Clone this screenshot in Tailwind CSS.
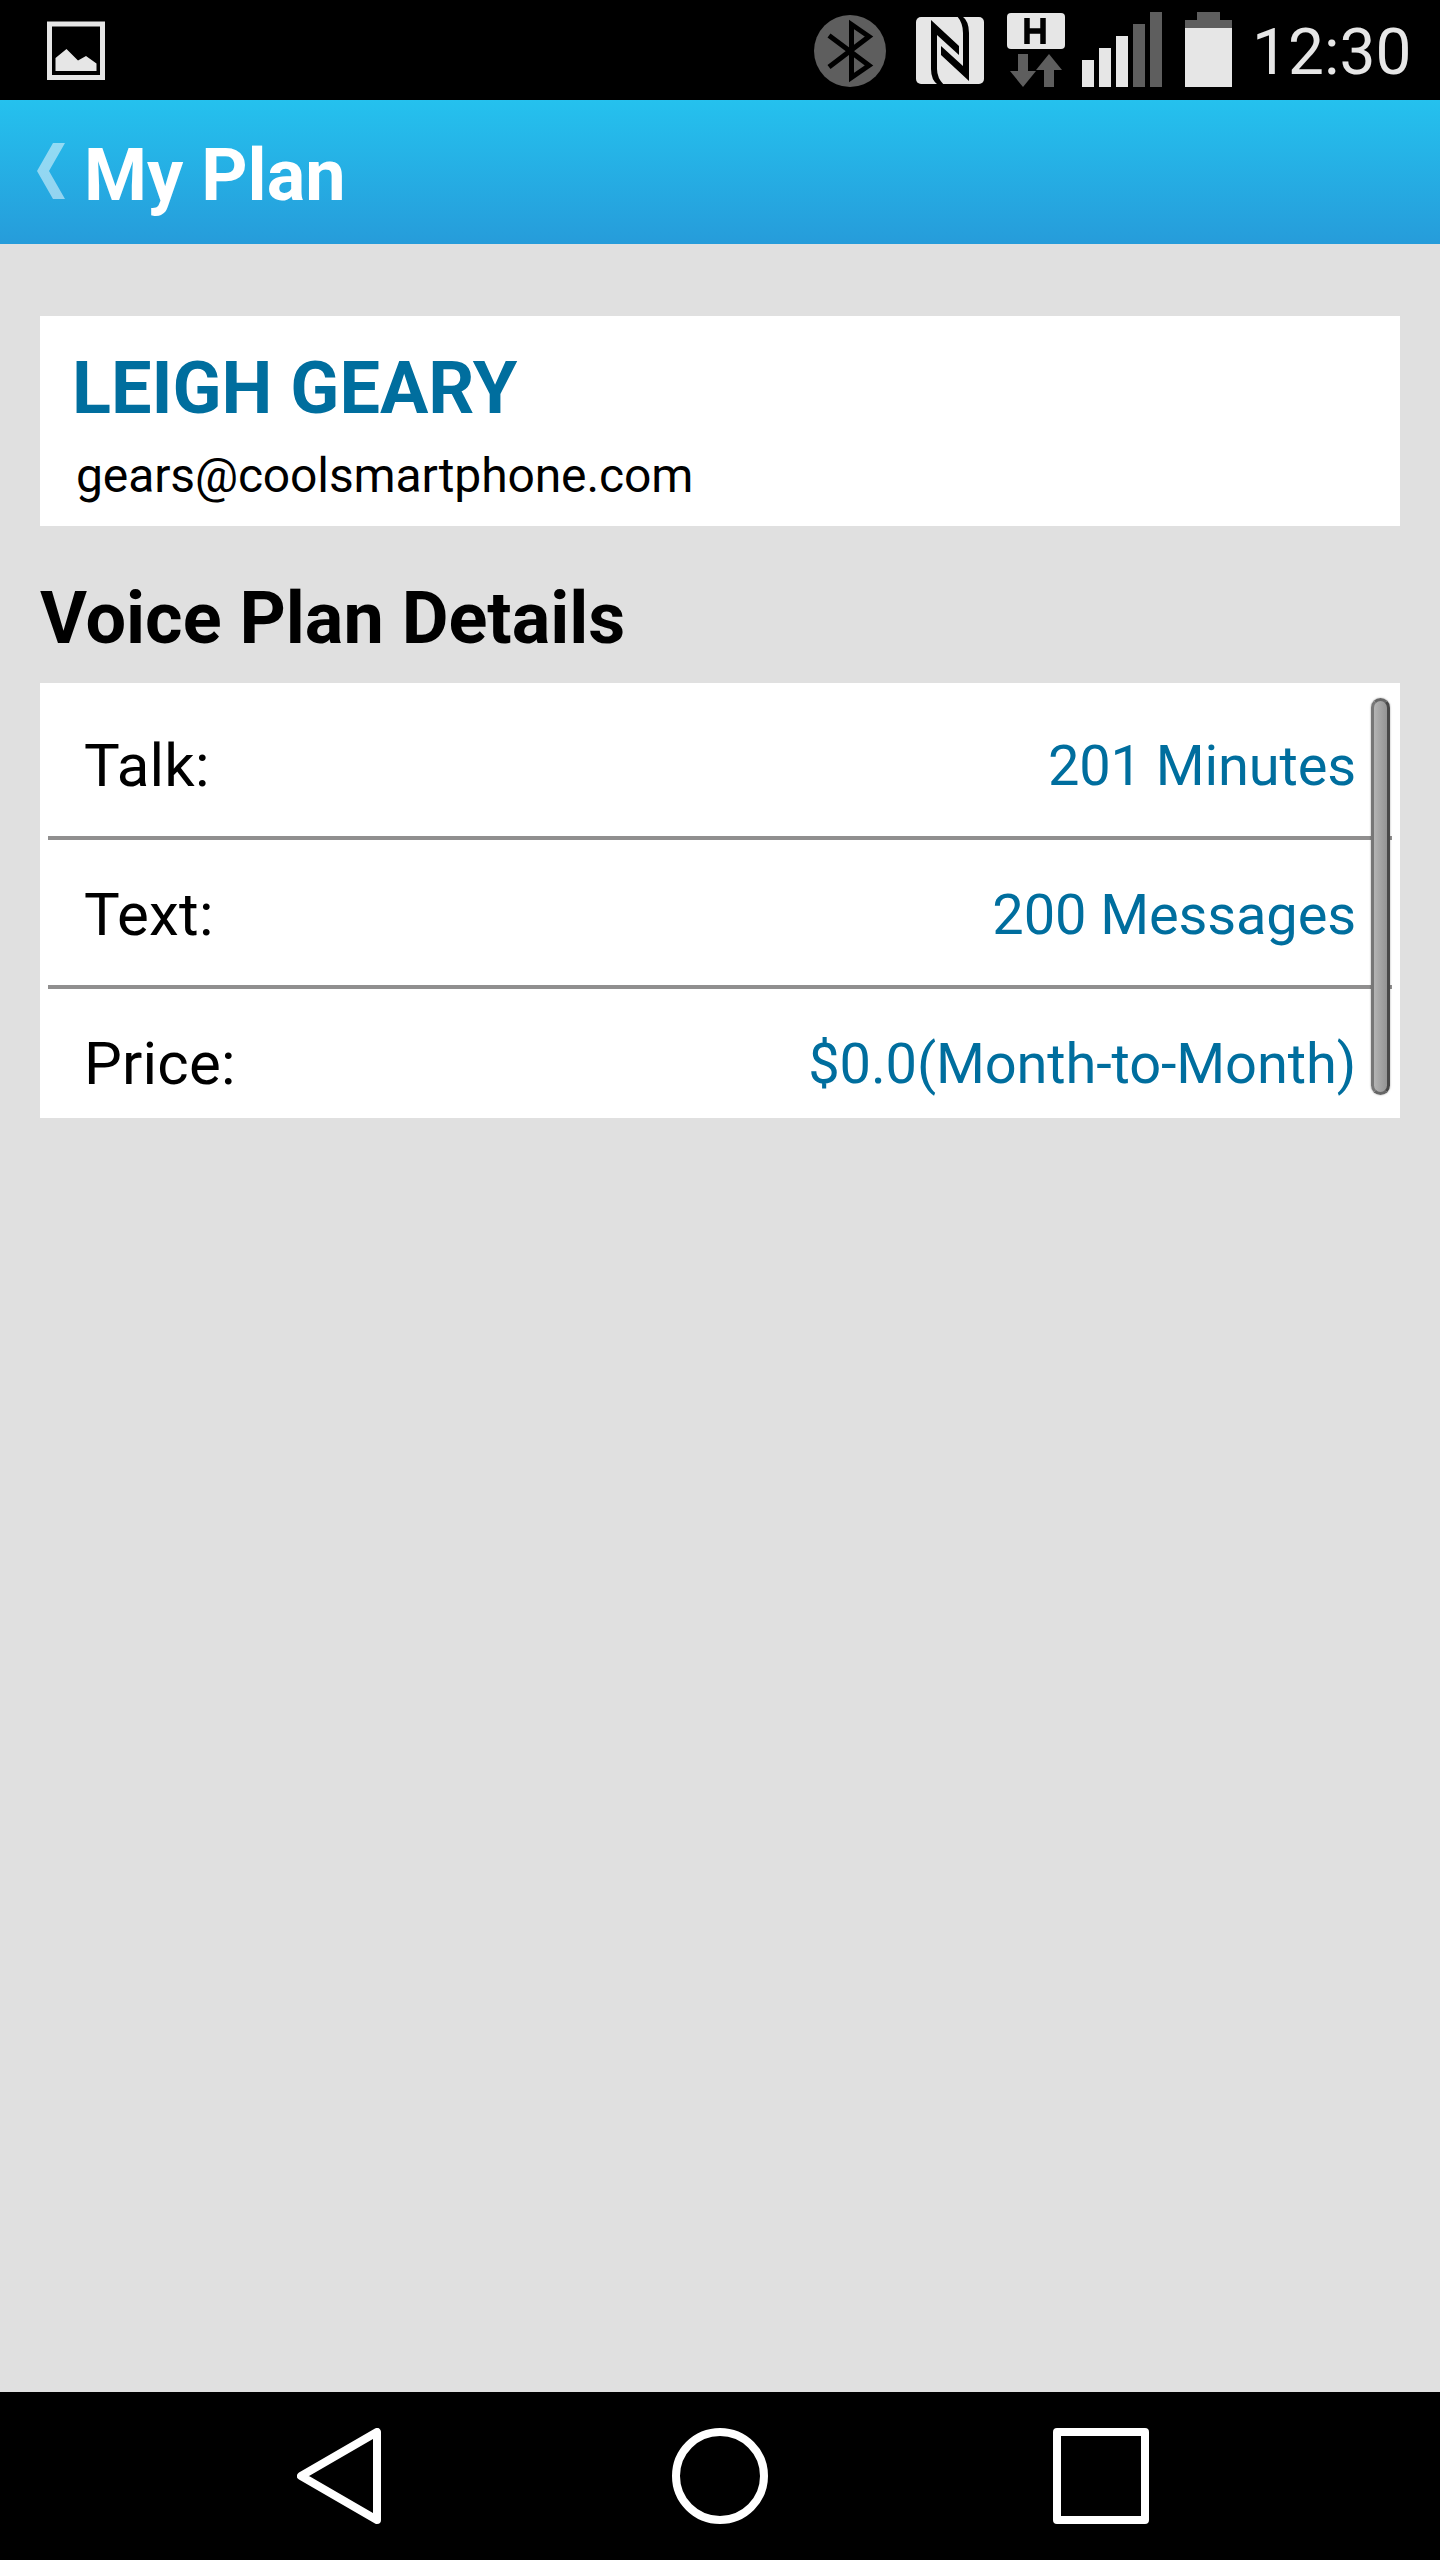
<!DOCTYPE html>
<html lang="en">
<head>
    <meta charset="UTF-8">
    <meta name="viewport" content="width=device-width, initial-scale=1.0">
    <title>My Plan</title>
    <script src="https://cdn.jsdelivr.net/npm/@tailwindcss/browser@4"></script>
</head>
<body class="bg-[#e0e0e0] font-['Roboto',sans-serif]">
    <div class="flex h-[2560px] w-[1440px] flex-col overflow-hidden">
        <!-- Status Bar -->
        <div class="flex h-[100px] shrink-0 items-center bg-black pr-[28px] pl-[47px] text-[#e6e6e6]">
            <svg class="h-[100px] w-[58px]" viewBox="47 0 58 100">
                <path d="M49.5 24h53v53.5h-53z" fill="none" stroke="#e6e6e6" stroke-width="5"/>
                <path d="M55.5 71V58l11-9 11.500 11.500 8-4.500 10.500 7.500V71z" fill="#e6e6e6"/>
            </svg>
            <div class="ml-auto flex items-center">
                <!-- Bluetooth -->
                <svg class="h-[100px] w-[72px]" viewBox="814 0 72 100">
                    <circle cx="850" cy="51" r="36" fill="#5e5e5e"/>
                    <path d="M829 35.500l40 30-17.500 12V24.500l17.500 12-40 30.500" fill="none" stroke="#000" stroke-width="5"/>
                </svg>
                <!-- NFC -->
                <svg class="ml-[30px] h-[100px] w-[68px]" viewBox="916 0 68 100">
                    <rect x="916" y="17" width="68" height="67" rx="5" fill="#e6e6e6"/>
                    <path d="M931 20l28 26v9L937 35v34q0 9 7 16h-6q-7-5-7-16z" fill="#000"/>
                    <path d="M969 81l-28-26v-9l22 20V33q0-10-6-17h5q7 5 7 17z" fill="#000"/>
                </svg>
                <!-- Mobile data -->
                <svg class="ml-[23px] h-[100px] w-[58px]" viewBox="1007 0 58 100">
                    <rect x="1007" y="13" width="58" height="36" rx="4" fill="#e6e6e6"/>
                    <path d="M1027 18v26M1043 18v26M1027 31h16" fill="none" stroke="#000" stroke-width="5.500"/>
                    <path d="M1018 54h10v17h8l-13 16-13-16h8zM1044 87h10V70h8l-13-16-13 16h8z" fill="#5e5e5e"/>
                </svg>
                <!-- Signal -->
                <svg class="ml-[17px] h-[100px] w-[80px]" viewBox="1082 0 80 100">
                    <path d="M1082 60h12v27h-12zM1099 48h12v39h-12zM1116 36h12v51h-12z" fill="#e6e6e6"/>
                    <path d="M1133 24h12v63h-12zM1150 12h12v75h-12z" fill="#5e5e5e"/>
                </svg>
                <!-- Battery -->
                <svg class="ml-[23px] h-[100px] w-[47px]" viewBox="1185 0 47 100">
                    <path d="M1197 12h23v8h12v8h-47v-8h12z" fill="#5e5e5e"/>
                    <path d="M1185 28h47v59h-47z" fill="#e6e6e6"/>
                </svg>
                <span class="ml-[20px] w-[160px] pt-[6px] text-[64px] leading-[76px] whitespace-nowrap">12:30</span>
            </div>
        </div>

        <!-- Header -->
        <header class="flex h-[144px] shrink-0 items-center bg-linear-to-b from-[#25c1ee] to-[#269cda] pl-[37px]">
            <svg class="mb-[2px] h-[56px] w-[28px]" viewBox="0 0 28 56">
                <path d="M16 0h12L12 28l16 28H16L0 28z" fill="#fff" fill-opacity=".5"/>
            </svg>
            <h1 class="ml-[19px] pt-[7px] text-[72px] leading-[84px] font-bold text-white">My Plan</h1>
        </header>

        <!-- Main Content -->
        <main class="flex-1 px-10 pt-[72px]">
            <div class="h-[210px] bg-white pt-[31px] pl-8">
                <h2 class="text-[72px] leading-[84px] font-bold text-[#006e9e]">LEIGH GEARY</h2>
                <p class="mt-[17px] pl-1 text-[48px] leading-[56px] tracking-[-0.13px]">gears@coolsmartphone.com</p>
            </div>

            <h2 class="mt-[51px] mb-[22px] text-[72px] leading-[84px] font-bold">Voice Plan Details</h2>

            <div class="relative h-[435px] overflow-hidden bg-white px-2 pt-2">
                <div class="flex h-[149px] items-center justify-between border-b-4 border-[#908f8f] pt-[5px] pr-9 pl-9">
                    <span class="text-[60px] leading-[70px] tracking-[0.2px]">Talk:</span>
                    <span class="text-[56px] leading-[70px] tracking-[-0.13px] text-[#006e9e]">201 Minutes</span>
                </div>
                <div class="flex h-[149px] items-center justify-between border-b-4 border-[#908f8f] pt-[5px] pr-9 pl-9">
                    <span class="text-[60px] leading-[70px] tracking-[0.2px]">Text:</span>
                    <span class="text-[56px] leading-[70px] tracking-[-0.13px] text-[#006e9e]">200 Messages</span>
                </div>
                <div class="flex h-[145px] items-center justify-between pt-[5px] pr-9 pl-9">
                    <span class="text-[60px] leading-[70px] tracking-[0.2px]">Price:</span>
                    <span class="text-[56px] leading-[70px] tracking-[-0.13px] text-[#006e9e]">$0.0(Month-to-Month)</span>
                </div>
                <!-- Scrollbar -->
                <div class="absolute top-[15px] right-[10px] h-[397px] w-[19px] rounded-full border-[3px] border-t-[#666] border-r-[#484848] border-b-[#666] border-l-[#777] bg-linear-to-r from-[#b4b4b4] to-[#949494] shadow-[0_0_2px_rgba(0,0,0,0.4)]"></div>
            </div>
        </main>

        <!-- Navigation Bar -->
        <nav class="flex h-[168px] shrink-0 items-center bg-black pl-[297px]">
            <svg class="h-[96px] w-[84px]" viewBox="0 0 84 96">
                <path d="M4 48L80 4v88z" fill="none" stroke="#fff" stroke-width="8" stroke-linejoin="round"/>
            </svg>
            <svg class="ml-[291px] h-[96px] w-[96px]" viewBox="0 0 96 96">
                <circle cx="48" cy="48" r="44" fill="none" stroke="#fff" stroke-width="8"/>
            </svg>
            <svg class="ml-[285px] h-[96px] w-[96px]" viewBox="0 0 96 96">
                <path d="M4 4h88v88H4z" fill="none" stroke="#fff" stroke-width="8" stroke-linejoin="round"/>
            </svg>
        </nav>
    </div>
</body>
</html>
